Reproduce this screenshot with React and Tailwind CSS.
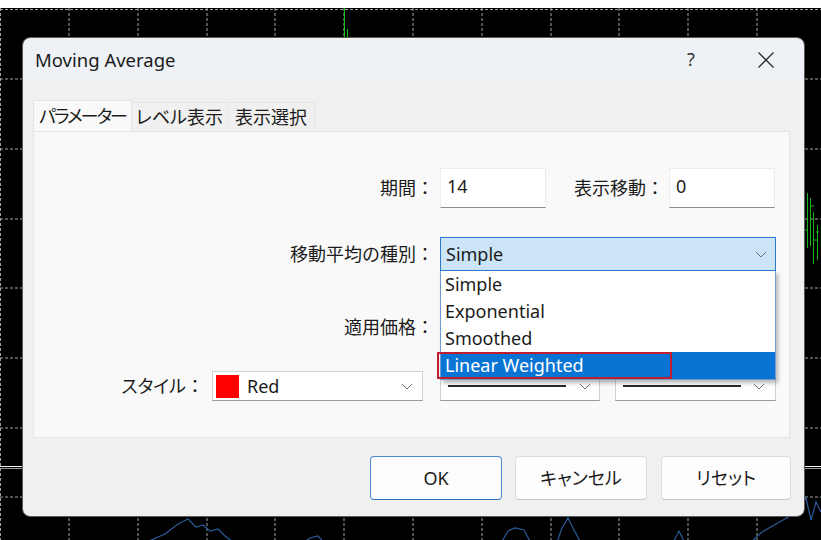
import React from "react";

const Chevron = () => (
  <svg width="12" height="7" viewBox="0 0 12 7" className="shrink-0">
    <path d="M1 1l5 5 5-5" fill="none" stroke="#6f6f6f" strokeWidth="1" />
  </svg>
);

const ChartBackdrop = () => {
  const xs = [0.5, 69, 138, 207, 275, 344, 413, 482, 551, 619, 688, 757];
  const ys = [9.5, 79, 149, 219, 288, 358, 428, 497];
  return (
    <svg
      className="absolute inset-0"
      width="821"
      height="540"
      viewBox="0 0 821 540"
    >
      <rect x="0" y="0" width="821" height="8" fill="#ffffff" />
      {xs.map((x) => (
        <line
          key={"v" + x}
          x1={x}
          y1="8"
          x2={x}
          y2="540"
          stroke="#a3a3a3"
          strokeDasharray="3 2"
        />
      ))}
      {ys.map((y) => (
        <line
          key={"h" + y}
          x1="0"
          y1={y}
          x2="821"
          y2={y}
          stroke="#a3a3a3"
          strokeDasharray="3 2"
        />
      ))}
      <line x1="0" y1="466.5" x2="821" y2="466.5" stroke="#f2f2f2" />
      <line x1="0" y1="468.5" x2="821" y2="468.5" stroke="#9a9a9a" />
      {/* green bars */}
      <line x1="344.5" y1="8" x2="344.5" y2="40" stroke="#18c418" />
      <line x1="347.5" y1="29" x2="347.5" y2="40" stroke="#18c418" />
      <path
        d="M807.5 193v55M805 230h3M810.5 198v48M811 206h3M813.5 212v52M813 240h4M817.5 225v35M816 232h3"
        stroke="#18b418"
        fill="none"
      />
      {/* blue line */}
      <polyline
        fill="none"
        stroke="#2a5a98"
        strokeWidth="1.2"
        points="140,545 165,534 178,524 188,519 196,527 203,525 210,531 218,529 226,537 238,545 300,545 310,538 318,536 326,545 500,545 508,531 515,528 524,530 532,545 556,545 562,528 568,518 574,530 582,545 672,545 679,531 686,545 748,545 762,532 776,524 790,516 800,505 806,498 811,520 816,502 821,512"
      />
    </svg>
  );
};

const Tab = ({ active, width, className = "", children }) => (
  <div
    className={
      (active
        ? "flex h-[31px] items-center justify-center whitespace-nowrap border border-b-0 border-[#e3e3e3] bg-[#f9f9f9] [font-feature-settings:'palt'] "
        : "mt-[2px] flex h-[29px] items-center justify-center whitespace-nowrap border-t border-r border-[#e6e6e6] bg-[#f0f0f0] [font-feature-settings:'palt'] ") +
      className
    }
    style={{ width }}
  >
    {children}
  </div>
);

const Button = ({ primary, className = "", children }) => (
  <button
    className={
      "flex h-[44px] items-center justify-center rounded-[4px] bg-[#fdfdfd] text-[18px] text-[#1b1b1b] [font-feature-settings:'palt'] " +
      (primary
        ? "border border-[#4b8bd3] border-b-[#2f6fb8] "
        : "border border-[#dcdcdc] border-b-[#c9c9c9] ") +
      className
    }
  >
    {children}
  </button>
);

export default function App() {
  return (
    <div className="relative h-[540px] w-[821px] overflow-hidden bg-black font-['Noto_Sans','Noto_Sans_CJK_JP',sans-serif] text-[18px] text-[#1b1b1b]">
      <ChartBackdrop />

      <div className="relative pl-[22px] pt-[37px]">
        <div className="flex h-[480px] w-[783px] flex-col overflow-hidden rounded-[8px] border border-[#5a5a5a]">
          {/* title bar */}
          <div className="flex h-[43px] items-center bg-[#eef2f7] pl-[12px]">
            <span className="text-[18.5px]">Moving Average</span>
            <span className="ml-auto w-[46px] text-center text-[#333]">?</span>
            <span className="ml-[29px] mr-[15px] flex w-[46px] justify-center">
              <svg width="18" height="18" viewBox="0 0 18 18">
                <path
                  d="M1.5 1.5l15 15M16.5 1.5l-15 15"
                  stroke="#2a2a2a"
                  strokeWidth="1.3"
                />
              </svg>
            </span>
          </div>

          {/* body */}
          <div className="flex-1 bg-[#f0f0f0] pl-[10px] pt-[19px]">
            <div className="flex">
              <Tab active width={99} className="tracking-[-2px]">
                パラメーター
              </Tab>
              <Tab width={96}>レベル表示</Tab>
              <Tab width={87}>表示選択</Tab>
            </div>

            <div className="h-[307px] w-[757px] border border-[#e5e5e5] bg-[#f9f9f9] pt-[36px]">
              {/* row 1 */}
              <div className="flex h-[40px] items-center">
                <div className="w-[400px] text-right">期間：</div>
                <div className="ml-[6px] h-[40px] w-[106px] border border-[#ececec] border-b-[#8c8c8c] bg-white pl-[6px] pt-[5px] leading-[24px]">
                  14
                </div>
                <div className="w-[118px] text-right">表示移動：</div>
                <div className="ml-[5px] h-[40px] w-[106px] border border-[#ececec] border-b-[#8c8c8c] bg-white pl-[6px] pt-[5px] leading-[24px]">
                  0
                </div>
              </div>

              {/* row 2 */}
              <div className="mt-[29px] flex h-[34px] items-center">
                <div className="w-[400px] text-right">移動平均の種別：</div>
                <div className="relative z-10 ml-[6px] w-[336px]">
                  <div className="flex h-[34px] items-center border border-[#2b79c9] bg-[#cce4f7] pl-[5px] pr-[8px]">
                    <span>Simple</span>
                    <span className="ml-auto">
                      <Chevron />
                    </span>
                  </div>
                  <div className="absolute left-0 top-full w-full border border-t-0 border-[#6f9bd0] bg-white shadow-[2px_3px_4px_rgba(0,0,0,0.28)]">
                    <div className="h-[27px] pl-[4px] leading-[27px]">Simple</div>
                    <div className="h-[27px] pl-[4px] leading-[27px]">Exponential</div>
                    <div className="h-[27px] pl-[4px] leading-[27px]">Smoothed</div>
                    <div className="relative h-[27px] bg-[#0a74d4] pl-[4px] leading-[27px] text-white">
                      Linear Weighted
                      <div className="absolute -left-[4px] top-0 h-[27px] w-[235px] border-2 border-[#c01d2e]" />
                    </div>
                  </div>
                </div>
              </div>

              {/* row 3 (its select sits under the open list) */}
              <div className="mt-[39px] flex h-[34px] items-center">
                <div className="w-[400px] text-right">適用価格：</div>
                <div className="ml-[6px] h-[34px] w-[336px] border border-[#d6d6d6] bg-white" />
              </div>

              {/* row 4 */}
              <div className="mt-[27px] flex h-[30px] items-center">
                <div className="w-[170px] text-right">
                  <span className="[font-feature-settings:'palt']">スタイル</span>：
                </div>
                <div className="ml-[8px] flex h-[30px] w-[211px] items-center border border-[#d2d2d2] border-b-[#9a9a9a] bg-white pl-[3px] pr-[9px]">
                  <span className="h-[23px] w-[23px] bg-[#ff0000]" />
                  <span className="ml-[8px]">Red</span>
                  <span className="ml-auto">
                    <Chevron />
                  </span>
                </div>
                <div className="ml-[17px] flex h-[30px] w-[160px] items-center border border-[#d2d2d2] border-b-[#9a9a9a] bg-white pl-[7px] pr-[8px]">
                  <span className="h-[2px] w-[118px] bg-[#2a2a2a]" />
                  <span className="ml-auto">
                    <Chevron />
                  </span>
                </div>
                <div className="ml-[15px] flex h-[30px] w-[161px] items-center border border-[#d2d2d2] border-b-[#9a9a9a] bg-white pl-[7px] pr-[10px]">
                  <span className="h-[2px] w-[118px] bg-[#2a2a2a]" />
                  <span className="ml-auto">
                    <Chevron />
                  </span>
                </div>
              </div>
            </div>

            {/* buttons */}
            <div className="mt-[18px] flex w-[758px] justify-end">
              <Button primary className="w-[132px]">
                OK
              </Button>
              <Button className="ml-[13px] w-[132px]">キャンセル</Button>
              <Button className="ml-[14px] w-[130px]">リセット</Button>
            </div>
          </div>
        </div>
      </div>
    </div>
  );
}
